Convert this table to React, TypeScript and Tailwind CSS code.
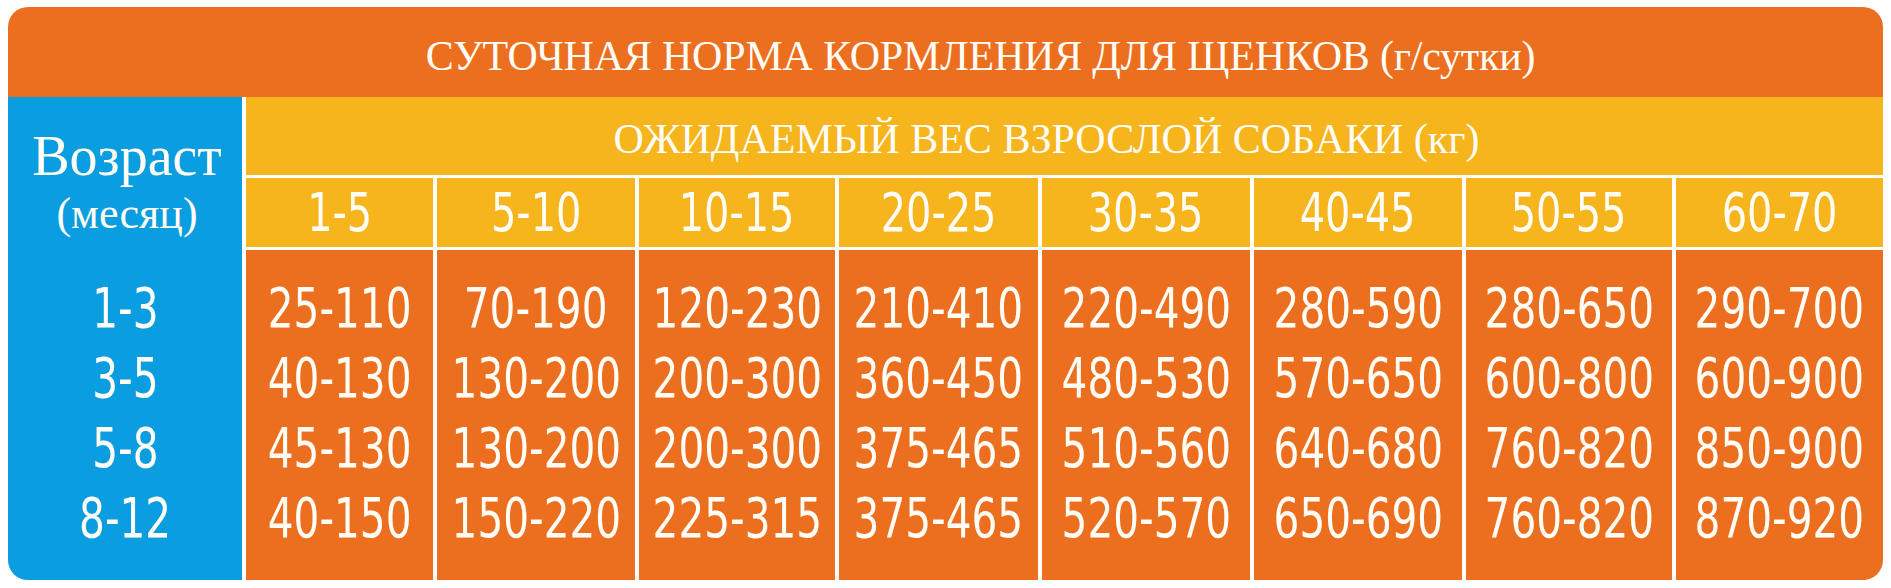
const sizes = ['1-5', '5-10', '10-15', '20-25', '30-35', '40-45', '50-55', '60-70']

const ages = ['1-3', '3-5', '5-8', '8-12']

// one entry per weight column, values top to bottom by age
const norms = [
  ['25-110', '40-130', '45-130', '40-150'],
  ['70-190', '130-200', '130-200', '150-220'],
  ['120-230', '200-300', '200-300', '225-315'],
  ['210-410', '360-450', '375-465', '375-465'],
  ['220-490', '480-530', '510-560', '520-570'],
  ['280-590', '570-650', '640-680', '650-690'],
  ['280-650', '600-800', '760-820', '760-820'],
  ['290-700', '600-900', '850-900', '870-920'],
]

const numFont = "font-['DejaVu_Sans_Condensed','DejaVu_Sans',sans-serif] font-stretch-condensed"
const serifFont = "font-['Liberation_Serif','DejaVu_Serif',serif]"

export default function App() {
  return (
    <div className="w-[1891px] h-[588px] bg-white pt-[7px] pl-[8px]">
      <div className="w-[1875px] h-[573px] rounded-[20px] overflow-hidden bg-white flex flex-col text-[#fffdf6]">
        <div className={`h-[90px] bg-[#ec6f1f] flex items-center justify-center pt-[8px] pl-[70px] text-[42px] tracking-[-0.2px] ${serifFont}`}>
          СУТОЧНАЯ НОРМА КОРМЛЕНИЯ ДЛЯ ЩЕНКОВ (г/сутки)
        </div>

        <div className="flex-1 flex gap-[4px]">
          <div className="w-[234px] bg-[#0a9ddf] flex flex-col">
            <div className={`h-[153px] flex flex-col items-center pt-[30px] pl-[4px] ${serifFont}`}>
              <span className="text-[56px] leading-[58px]">Возраст</span>
              <span className="text-[44px] leading-[46px] mt-[6px]">(месяц)</span>
            </div>
            <div className={`pt-[23px] flex flex-col items-center text-[55px] ${numFont}`}>
              {ages.map((a) => (
                <div key={a} className="h-[70px] leading-[70px] scale-x-[0.82]">{a}</div>
              ))}
            </div>
          </div>

          <div className="flex-1 flex flex-col gap-[3px]">
            <div className={`h-[78px] bg-[#f6b41d] flex items-center justify-center pt-[6px] pr-[36px] text-[42px] ${serifFont}`}>
              ОЖИДАЕМЫЙ ВЕС ВЗРОСЛОЙ СОБАКИ (кг)
            </div>
            <div className="h-[69px] grid grid-cols-[187px_198px_196px_199px_208px_208px_206px_1fr] gap-[4px]">
              {sizes.map((s) => (
                <div key={s} className={`bg-[#f6b41d] flex items-center justify-center text-[54px] ${numFont}`}>
                  <span className="scale-x-[0.82] leading-[60px]">{s}</span>
                </div>
              ))}
            </div>
            <div className="flex-1 grid grid-cols-[187px_198px_196px_199px_208px_208px_206px_1fr] gap-[4px]">
              {norms.map((col, i) => (
                <div key={i} className={`bg-[#ec6f1f] pt-[23px] flex flex-col items-center text-[55px] ${numFont}`}>
                  {col.map((v, j) => (
                    <div key={j} className="h-[70px] leading-[70px] whitespace-nowrap scale-x-[0.82]">{v}</div>
                  ))}
                </div>
              ))}
            </div>
          </div>
        </div>
      </div>
    </div>
  )
}
